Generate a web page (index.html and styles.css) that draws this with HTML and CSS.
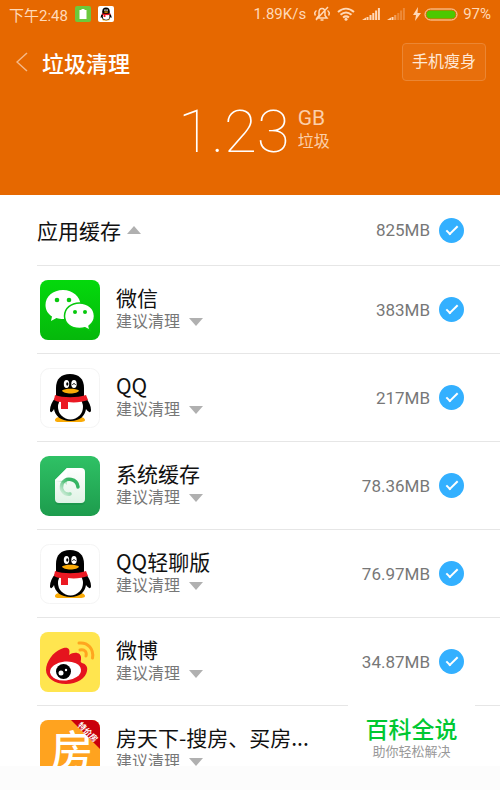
FILE: index.html
```html
<!DOCTYPE html>
<html lang="zh-CN">
<head>
    <meta charset="UTF-8">
    <meta name="viewport" content="width=device-width, initial-scale=1.0">
    <title>垃圾清理</title>
    <link rel="stylesheet" href="styles.css">
</head>
<body>

    <!-- Shared drawings -->
    <svg class="sprite" aria-hidden="true">
        <symbol id="penguin" viewBox="0 0 60 60">
            <path d="M15 52c0-3 6-4 10-3h10c4-1 10 0 10 3 0 2-4 2-8 2H21c-4 0-6 0-6-2z" fill="#faab07"/>
            <path d="M15 30c-3 4-5 8-5 12 0 3 2 3 4-1 1 7 7 12 16.500 12S45 48 46 41c3 4 5 4 5 1 0-4-2-8-5-12z" fill="#000"/>
            <ellipse cx="30.500" cy="39" rx="12.500" ry="12.500" fill="#fff"/>
            <path d="M16 30V20C16 11 21 6 30 6s14 5 14 14v10z" fill="#000"/>
            <ellipse cx="26.500" cy="16" rx="2.700" ry="4" fill="#fff"/>
            <ellipse cx="34" cy="16" rx="2.700" ry="4" fill="#fff"/>
            <ellipse cx="27.300" cy="16" rx="1.100" ry="1.800" fill="#000"/>
            <path d="M32.500 17c.8-2 2.200-2 3 0" fill="none" stroke="#000" stroke-width="1"/>
            <path d="M22 22.500c3-2.500 14-2.500 17 0-1 4-16 4-17 0z" fill="#faab07"/>
            <path d="M15 27c8 3 22 3 31 0l2 5c-6 2-13 3-20 2V41h-7v-7c-3 0-5-1-7-2z" fill="#eb1923"/>
        </symbol>
    </svg>

    <div class="screen">
        <header class="header">
            <!-- Status Bar -->
            <div class="status-bar">
                <span>下午2:48</span>
                <svg class="status-app" viewBox="0 0 16 16">
                    <rect width="16" height="16" rx="2" fill="#6cc93c"/>
                    <path d="M6.500 3h3v1h2v9h-7V4h2z" fill="#fff"/>
                </svg>
                <svg class="status-app" viewBox="0 0 16 16">
                    <rect width="16" height="16" rx="2" fill="#fff"/>
                    <use href="#penguin" x="0" y="0" width="16" height="16"/>
                </svg>
                <span class="speed">1.89K/s</span>
                <svg class="status-mute" viewBox="0 0 16 16" fill="none" stroke="currentColor" stroke-width="1.500">
                    <path d="M3 12h10l-2-2.500V6.500C11 4 10 2.500 8 2.500S5 4 5 6.500v3zM6.500 14h3M14 1L2 14M2.500 4.500C.5 6 .5 8 1.500 9.500M13.500 4.500c2 1.500 2 3.500 1 5"/>
                </svg>
                <svg class="status-wifi" viewBox="0 0 18 14" fill="none" stroke="currentColor" stroke-width="2">
                    <path d="M1 5c5-4.500 11-4.500 16 0M3.500 7.800c3.500-3 7.500-3 11 0M6 10.500c2-1.500 4-1.500 6 0"/>
                    <circle cx="9" cy="12.300" r="1.500" fill="currentColor" stroke="none"/>
                </svg>
                <svg class="status-signal" viewBox="0 0 18 12" fill="currentColor">
                    <path d="M0 12l4-2.500V12zM4.500 9h2v3h-2zM7.500 7h2v5h-2zM10.300 5h2v7h-2zM13.100 2.500h2v9.500h-2zM15.900 0h2v12h-2z"/>
                </svg>
                <svg class="status-signal" viewBox="0 0 18 12" fill="currentColor">
                    <path d="M0 12l4-2.500V12zM4.500 9h2v3h-2z"/>
                    <path d="M7.500 7h1v5h-1z" opacity=".8"/>
                    <path d="M8.500 7h1v5h-1zM10.300 5h2v7h-2zM13.100 2.500h2v9.500h-2zM15.900 0h2v12h-2z" opacity=".3"/>
                </svg>
                <svg class="status-bolt" viewBox="0 0 8 14" fill="currentColor">
                    <path d="M5 0L0 8h3l-1 6 6-8H4.500z"/>
                </svg>
                <svg class="status-battery" viewBox="0 0 34 13">
                    <rect x="1" y="1" width="32" height="11" rx="5.500" fill="none" stroke="#ffd9b8"/>
                    <rect x="2.500" y="2.500" width="29" height="8" rx="4" fill="#4cc800"/>
                </svg>
                <span>97%</span>
            </div>

            <!-- Title Bar -->
            <div class="title-bar">
                <button class="back-button" aria-label="返回">
                    <svg viewBox="0 0 12 20" fill="none" stroke="currentColor" stroke-width="1.500">
                        <path d="M11 1L1 10l10 9"/>
                    </svg>
                </button>
                <h1>垃圾清理</h1>
                <button class="slim-button">手机瘦身</button>
            </div>

            <div class="total">
                <span class="total-number">1.23</span>
                <div class="total-unit">
                    <span class="unit">GB</span>
                    <span class="unit-label">垃圾</span>
                </div>
            </div>
        </header>

        <!-- Cache List -->
        <main class="list">
            <div class="group">
                <h2>应用缓存</h2>
                <span class="arrow arrow-up"></span>
                <label class="size" for="all">825MB</label>
                <input type="checkbox" id="all" checked>
            </div>

            <div class="item">
                <svg class="app-icon" viewBox="0 0 60 60">
                    <defs>
                        <linearGradient id="wechat" x2="0" y2="1">
                            <stop stop-color="#04d90c"/>
                            <stop offset="1" stop-color="#05b80b"/>
                        </linearGradient>
                    </defs>
                    <rect width="60" height="60" rx="8" fill="url(#wechat)"/>
                    <path d="M23 10C13 10 5.500 16.500 5.500 25c0 5 2.500 9 6.500 11.500L11 41l5.500-3c2 .7 4.500 1 6.500 1 10 0 17.500-6 17.500-14S33 10 23 10z" fill="#fff"/>
                    <path d="M39.500 23C31 23 24.500 28.500 24.500 36s6.500 12.500 15 12.500c2 0 4-.3 5.500-.8l5 2.600-1-4.300c3.500-2.500 5.500-6 5.500-10 0-7.500-6.500-13-15-13z" fill="#fff" stroke="#06c80c" stroke-width="1.500"/>
                    <g fill="#06c80c">
                        <circle cx="17" cy="20" r="2.300"/>
                        <circle cx="29" cy="20" r="2.300"/>
                        <circle cx="35" cy="32" r="2"/>
                        <circle cx="45" cy="32" r="2"/>
                    </g>
                </svg>
                <div class="info">
                    <h3>微信</h3>
                    <p>建议清理 <span class="arrow"></span></p>
                </div>
                <label class="size" for="wechatCheck">383MB</label>
                <input type="checkbox" id="wechatCheck" checked>
            </div>

            <div class="item">
                <svg class="app-icon" viewBox="0 0 60 60">
                    <rect x=".5" y=".5" width="59" height="59" rx="9" fill="#fff" stroke="#f4f4f4"/>
                    <use href="#penguin" width="60" height="60"/>
                </svg>
                <div class="info">
                    <h3>QQ</h3>
                    <p>建议清理 <span class="arrow"></span></p>
                </div>
                <label class="size" for="qqCheck">217MB</label>
                <input type="checkbox" id="qqCheck" checked>
            </div>

            <div class="item">
                <svg class="app-icon" viewBox="0 0 60 60">
                    <defs>
                        <linearGradient id="system" x2="0" y2="1">
                            <stop stop-color="#2fc165"/>
                            <stop offset="1" stop-color="#1d9c4d"/>
                        </linearGradient>
                        <linearGradient id="paper" x2="0" y2="1">
                            <stop stop-color="#fff"/>
                            <stop offset="1" stop-color="#dff3e5"/>
                        </linearGradient>
                        <linearGradient id="ring" x1="1" x2="0" y2="1">
                            <stop offset=".3" stop-color="#35b563"/>
                            <stop offset="1" stop-color="#35b563" stop-opacity=".1"/>
                        </linearGradient>
                    </defs>
                    <rect width="60" height="60" rx="9" fill="url(#system)"/>
                    <path d="M27 14h14a4 4 0 0 1 4 4v27a4 4 0 0 1-4 4H19a4 4 0 0 1-4-4V26z" fill="#138541" opacity=".4"/>
                    <path d="M27 12h14a4 4 0 0 1 4 4v27a4 4 0 0 1-4 4H19a4 4 0 0 1-4-4V24z" fill="url(#paper)"/>
                    <path d="M27 12v9c0 3-1 4-4 4h-8c5 0 9 1 12 4V12z" fill="#bfe8cc"/>
                    <path d="M27 12v9a3 3 0 0 1-3 3h-9z" fill="#fff"/>
                    <path d="M38 31A8.500 8.500 0 0 0 22 28c-2 6 2 11 8 10" fill="none" stroke="url(#ring)" stroke-width="3.500" stroke-linecap="round"/>
                </svg>
                <div class="info">
                    <h3>系统缓存</h3>
                    <p>建议清理 <span class="arrow"></span></p>
                </div>
                <label class="size" for="systemCheck">78.36MB</label>
                <input type="checkbox" id="systemCheck" checked>
            </div>

            <div class="item">
                <svg class="app-icon" viewBox="0 0 60 60">
                    <rect x=".5" y=".5" width="59" height="59" rx="9" fill="#fff" stroke="#f4f4f4"/>
                    <use href="#penguin" width="60" height="60"/>
                </svg>
                <div class="info">
                    <h3>QQ轻聊版</h3>
                    <p>建议清理 <span class="arrow"></span></p>
                </div>
                <label class="size" for="qqLiteCheck">76.97MB</label>
                <input type="checkbox" id="qqLiteCheck" checked>
            </div>

            <div class="item">
                <svg class="app-icon" viewBox="0 0 60 60">
                    <rect width="60" height="60" rx="8" fill="#ffe54f"/>
                    <path d="M6 38c0-8 7-18 15-21 6-3 10-1 8 6 5-4 13-3 12 4 0 2-1 3 1 4 4 1 6 4 5 8-1 7-10 13-21 13S6 46 6 38z" fill="#e5141e"/>
                    <ellipse cx="25.500" cy="39" rx="15.500" ry="9.500" fill="#fff" transform="rotate(-5 25.500 39)"/>
                    <circle cx="23.500" cy="39.500" r="7.500" fill="#000"/>
                    <circle cx="21" cy="41" r="2.500" fill="#fff"/>
                    <circle cx="26" cy="38" r="1.200" fill="#fff"/>
                    <g fill="none" stroke="#ffa51f" stroke-linecap="round" stroke-width="3">
                        <path d="M39 11c9-1 15 6 13.500 15"/>
                        <path d="M40 18c5-1 7 2 6 6"/>
                    </g>
                </svg>
                <div class="info">
                    <h3>微博</h3>
                    <p>建议清理 <span class="arrow"></span></p>
                </div>
                <label class="size" for="weiboCheck">34.87MB</label>
                <input type="checkbox" id="weiboCheck" checked>
            </div>

            <div class="item">
                <svg class="app-icon" viewBox="0 0 60 60">
                    <rect width="60" height="60" rx="8" fill="#ffa31f"/>
                    <text class="fang" x="11" y="46">房</text>
                    <path d="M31 0h21a8 8 0 0 1 8 8v21z" fill="#c9000c"/>
                    <text class="ribbon" x="-12" y="3" transform="translate(48 12) rotate(44)">特价房</text>
                </svg>
                <div class="info">
                    <h3>房天下-搜房、买房...</h3>
                    <p>建议清理 <span class="arrow"></span></p>
                </div>
            </div>
        </main>

        <footer class="footer">
            <div class="brand">
                <strong>百科全说</strong>
                <span>助你轻松解决</span>
            </div>
        </footer>
    </div>

</body>
</html>
```
FILE: styles.css
```css
/* General Styles */
* {
    box-sizing: border-box;
}

body {
    font-family: Roboto, "Noto Sans CJK SC", sans-serif;
    margin: 0;
    background: #fff;
    color: #111;
}

h1, h2, h3, p {
    margin: 0;
    font-weight: 400;
}

button {
    border: none;
    background: none;
    padding: 0;
    font-family: inherit;
    color: inherit;
    cursor: pointer;
}

.sprite {
    display: none;
}

.screen {
    display: flex;
    flex-direction: column;
    height: 100vh;
}

/* Header */
.header {
    flex: none;
    background: #e66800;
    color: #fff;
    padding-bottom: 30px;
}

.status-bar {
    display: flex;
    align-items: center;
    height: 28px;
    padding: 0 9px;
    font-size: 15px;
    color: #ffd9b8;
}

.status-app {
    width: 16px;
    height: 16px;
    margin-left: 7px;
}

.speed {
    margin-left: auto;
}

.status-mute {
    width: 16px;
    height: 16px;
    margin-left: 8px;
}

.status-wifi {
    width: 18px;
    height: 14px;
    margin-left: 7px;
}

.status-signal {
    width: 18px;
    height: 12px;
    margin-left: 7px;
}

.status-bolt {
    width: 8px;
    height: 14px;
    margin-left: 8px;
}

.status-battery {
    width: 34px;
    height: 13px;
    margin: 0 5px 0 3px;
}

.title-bar {
    display: flex;
    align-items: center;
    height: 68px;
    padding: 0 14px 0 16px;
}

.back-button {
    width: 26px;
    height: 40px;
    text-align: left;
    color: #f5b988;
}

.back-button svg {
    display: block;
    width: 12px;
    height: 20px;
}

h1 {
    padding-top: 6px;
    font-size: 22px;
    font-weight: 500;
    line-height: 32px;
}

.slim-button {
    margin-left: auto;
    width: 84px;
    height: 38px;
    border: 1px solid #eb8633;
    border-radius: 4px;
    background: #e86f0c;
    font-size: 16px;
    line-height: 20px;
    color: #ffe8d6;
}

/* Total */
.total {
    display: flex;
    justify-content: center;
    gap: 8px;
    padding: 4px 0 1px 8px;
}

.total-number {
    font-size: 60px;
    font-weight: 100;
    line-height: 64px;
}

.total-unit {
    display: flex;
    flex-direction: column;
    padding-top: 5px;
    color: #fbcfaa;
}

.unit {
    font-size: 21px;
    line-height: 26px;
}

.unit-label {
    font-size: 16px;
    line-height: 22px;
}

/* List */
.list {
    flex: 1;
    min-height: 0;
    overflow: hidden;
    padding-left: 37px;
}

.group,
.item {
    display: flex;
    align-items: center;
    padding-right: 36px;
}

.group {
    height: 70px;
}

.item {
    height: 88px;
    padding-left: 3px;
    border-top: 1px solid #e6e6e6;
}

h2, h3 {
    font-family: "Noto Sans CJK SC", sans-serif;
    font-size: 21px;
    line-height: 24px;
}

.app-icon {
    flex: none;
    width: 60px;
    height: 60px;
    margin-right: 16px;
}

.info p {
    display: flex;
    align-items: center;
    gap: 9px;
    font-size: 16px;
    line-height: 26px;
    color: #777;
}

.arrow {
    border: 7px solid transparent;
    border-top: 8px solid #b0b0b0;
    border-bottom: none;
}

.arrow-up {
    margin-left: 6px;
    border-top: none;
    border-bottom: 8px solid #b0b0b0;
}

.size {
    margin-left: auto;
    font-size: 17px;
    color: #777;
}

input[type="checkbox"] {
    appearance: none;
    display: grid;
    place-items: center;
    width: 25px;
    height: 25px;
    margin: 0 0 0 9px;
    border-radius: 50%;
    background: #ddd;
}

input[type="checkbox"]:checked {
    background: #33b0ff;
}

input[type="checkbox"]:checked::after {
    content: "";
    width: 10px;
    height: 4px;
    margin-bottom: 3px;
    border-left: 2px solid #fff;
    border-bottom: 2px solid #fff;
    transform: rotate(-45deg);
}

.fang {
    font-size: 42px;
    font-weight: 500;
    fill: #fff;
}

.ribbon {
    font-size: 8px;
    font-weight: 700;
    fill: #fff;
}

/* Footer */
.footer {
    position: relative;
    flex: none;
    height: 24px;
    background: #fcfcfc;
}

.brand {
    position: absolute;
    right: 25px;
    bottom: 100%;
    display: flex;
    flex-direction: column;
    align-items: center;
    width: 127px;
    height: 62px;
    padding-top: 13px;
    background: #fff;
}

.brand strong {
    font-size: 23px;
    font-weight: 500;
    line-height: 28px;
    color: #00c832;
}

.brand span {
    font-size: 13px;
    line-height: 14px;
    color: #999;
}
```
